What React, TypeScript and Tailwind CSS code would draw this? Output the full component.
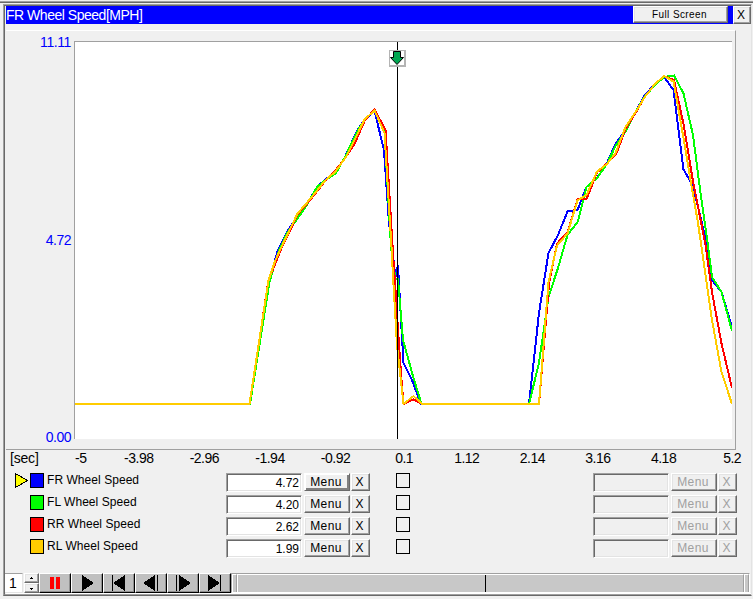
import type { ReactNode } from 'react';
import clsx from 'clsx';

type Channel = {
  name: string;
  value: string;
  swatch: string;
  stroke: string;
  points: string;
};

const channels: Channel[] = [
  {
    name: 'FR Wheel Speed',
    value: '4.72',
    swatch: 'bg-[#0000ff]',
    stroke: '#0000ff',
    points:
      '75,404 250,404 269,283 277.5,251 287,232 299,214 308,202 317,187 327,178 336,173 345,157 357,131 365,119 374.5,111 384,150 389,223 395.5,277 396,272 398,265 401,320 403.5,363 412,380 421,404 529,404 539,313 548.5,253 558,235 567.5,211.5 577.5,210 586.5,187 597,178 606.5,164 615.5,144 625.5,130 635,113 644.5,95.5 654,85 664,77 673.5,90 683.5,169.5 692,184 698,207 706,240 712,280 721.5,292 732,327',
  },
  {
    name: 'FL Wheel Speed',
    value: '4.20',
    swatch: 'bg-[#00ff00]',
    stroke: '#00ff00',
    points:
      '75,404 250,404 269.5,282 278,253 287,233 300,215 308,203 317,187 327,179 336,173 345,157 358,130 365,119 374.5,110.5 384.5,132 391,247 395.5,279 398,279 403,340 413.5,378 421.5,404 529,404 539,363 548.5,297 558,268 567.5,235 578,221.5 586.5,187 597,178 607,164 615.5,146 625.5,131.5 635,113 644.5,97 654,86 664,77 674,75.5 683.5,93.5 693,135 700.5,193 707,238 712,277 721.5,292 732,331',
  },
  {
    name: 'RR Wheel Speed',
    value: '2.62',
    swatch: 'bg-[#ff0000]',
    stroke: '#ff0000',
    points:
      '75,404 249.5,404 268.5,280 276,262 282,247 298,214 311,199 326,180 335,171 346,157 355,143 365,120 374.5,109.5 385.5,130 393,253 395.5,290 398,330 401,373 403.5,404 413.5,399.5 422,404 539,404 549,284 557,243.5 567.5,232.5 577.5,199.5 586.5,199 597,172.5 607,163.5 616,154.5 625.5,129 635.5,113 644.5,97.5 654,85 664,76 674,80 683.5,124 693,181.5 702,227 705.5,245 712,292 721.5,343.5 732,388',
  },
  {
    name: 'RL Wheel Speed',
    value: '1.99',
    swatch: 'bg-[#ffcc00]',
    stroke: '#ffcc00',
    points:
      '75,404 249.5,404 268.5,280.5 275,261 281,248 297.5,213.5 311,198 326,179.5 335,172 346,157 355,139 364.5,119.5 374.5,110.5 384.5,133 391.5,247 392.5,267 397,345 403.5,404 413.5,396 422,404 539,404 548.5,282 557,245.5 567.5,233.5 577.5,200.5 586.5,195 597,171.5 607,164 615.5,153 625.5,127 635,113 644.5,97.5 654,85 664,76 673.5,81.5 683.5,138 690.5,180 698,223 712,320 721.5,372 732,404',
  },
];

const ticks = ['-3.98', '-2.96', '-1.94', '-0.92', '0.1', '1.12', '2.14', '3.16', '4.18', '5.2'];

function Raised({ children, className }: { children?: ReactNode; className?: string }) {
  return (
    <button
      className={clsx(
        'flex shrink-0 items-center justify-center border border-t-white border-l-white border-r-[#696969] border-b-[#696969] bg-[#f0f0f0] shadow-[inset_-1px_-1px_0_#a0a0a0,inset_1px_1px_0_#e3e3e3] leading-none',
        className
      )}
    >
      {children}
    </button>
  );
}

function ValueGroup({ value, disabled, focused }: { value?: string; disabled?: boolean; focused?: boolean }) {
  const label = disabled ? 'text-[#a0a0a0] [text-shadow:1px_1px_0_#fff]' : 'text-black';
  return (
    <div className={clsx('flex h-[19px] text-[12px]', label)}>
      <div
        className={clsx(
          'h-[19px] w-[76px] border border-t-[#a0a0a0] border-l-[#a0a0a0] border-r-white border-b-white pr-[2px] text-right leading-[19px] shadow-[inset_1px_1px_0_#696969,inset_-1px_-1px_0_#e3e3e3]',
          disabled ? 'bg-[#f0f0f0]' : 'bg-white'
        )}
      >
        {value}
      </div>
      <Raised
        className={clsx(
          'ml-[2px] h-[18px] w-[46px] pr-[2px] tracking-[0.4px]',
          focused && 'border-t-[#696969] border-l-[#696969] shadow-[inset_1px_1px_0_#fff,inset_-2px_-2px_0_#808080]'
        )}
      >
        Menu
      </Raised>
      <Raised className="ml-px h-[18px] w-[19px] pr-[2px]">X</Raised>
    </div>
  );
}

function Plot() {
  return (
    <svg width="657" height="397" viewBox="75 42 657 397" className="block bg-white" shapeRendering="crispEdges">
      {channels.map((c) => (
        <polyline key={c.name} points={c.points} fill="none" stroke={c.stroke} strokeWidth="2" />
      ))}
      <rect x="397" y="42" width="1" height="397" fill="#000" />
      {/* cursor handle */}
      <rect x="389" y="50" width="17" height="17" fill="#b4b4b4" />
      <rect x="390" y="51" width="14" height="14" fill="#fff" />
      <path
        d="M393.5 51.5h7v6h3L397 64.5 390.5 57.5h3z"
        fill="#00a651"
        stroke="#000"
        shapeRendering="geometricPrecision"
      />
    </svg>
  );
}

function TransportButton({ children }: { children: ReactNode }) {
  return (
    <button className="h-[20px] w-[32px] shrink-0 border border-r-black border-b-black border-t-white border-l-white bg-[#c0c0c0] shadow-[inset_-1px_-1px_0_#909090]">
      <svg width="30" height="18" viewBox="0 0 30 18" shapeRendering="crispEdges" fill="#000">
        {children}
      </svg>
    </button>
  );
}

export default function App() {
  return (
    <div className="flex h-[599px] w-[753px] flex-col overflow-hidden bg-[#f0f0f0] pt-px font-['Liberation_Sans',Arial,sans-serif] text-black">
      <div className="h-[2px] shrink-0 border-b border-b-[#696969] bg-[#a0a0a0]" />
      <div className="ml-[3px] mt-px h-[592px] w-[749px] shrink-0 border border-t-[#a0a0a0] border-l-[#a0a0a0] border-r-[#e3e3e3] border-b-[#696969]">
        <div className="flex h-[590px] flex-col border-t border-l border-b border-t-[#696969] border-l-[#696969] border-b-[#a0a0a0] pl-px">
          {/* Title bar */}
          <div className="flex h-[18px] shrink-0 bg-[#0000ff] text-white">
            <div className="flex-1 whitespace-nowrap text-[14px] leading-[19px] tracking-[-0.48px]">FR Wheel Speed[MPH]</div>
            <Raised className="h-[17px] w-[95px] pr-[2px] text-[10px] tracking-[0.4px] text-black">Full Screen</Raised>
            <Raised className="ml-[5px] h-[18px] w-[18px] pr-[2px] text-[12px] text-black">X</Raised>
          </div>

          {/* Chart */}
          <div className="mt-[6px] flex h-[420px] w-[730px] shrink-0 border-t border-r border-b border-t-white border-r-[#a0a0a0] border-b-[#a0a0a0] pt-[10px]">
            <div className="-mt-[7px] flex h-[411px] w-[65px] flex-col justify-between text-right text-[14px] leading-[16px] tracking-[-0.5px] text-[#0000ff]">
              <div className="tracking-[-0.4px]">11.11</div>
              <div>4.72</div>
              <div>0.00</div>
            </div>
            <div className="ml-[3px] h-[398px] border-t border-l border-[#a0a0a0]">
              <Plot />
            </div>
          </div>

          {/* Time axis */}
          <div className="flex h-[23px] shrink-0 text-[14px] leading-[17px] tracking-[-0.5px]">
            <div className="w-[69px] shrink-0 pl-[4px] tracking-[-0.2px]">[sec]</div>
            <div className="w-[31px] shrink-0">-5</div>
            {ticks.map((t) => (
              <div key={t} className={clsx('w-[65.6px] shrink-0 text-center', t.length === 3 && 'pl-[6px]')}>
                {t}
              </div>
            ))}
          </div>

          {/* Channels */}
          <div className="flex h-[100px] shrink-0 flex-col gap-[3px]">
            {channels.map((c, i) => (
              <div key={c.name} className="flex h-[19px] shrink-0">
                <div className="w-[24px] pl-[9px]">
                  {i === 0 && (
                    <svg width="14" height="15" viewBox="0 0 14 15" shapeRendering="crispEdges">
                      <path d="M.5.5v14l12-7z" fill="#ff0" stroke="#000" />
                    </svg>
                  )}
                </div>
                <div className={clsx('h-[15px] w-[14px] border border-black', c.swatch)} />
                <div className="w-[182px] pl-[3px] text-[12px] leading-[14px] tracking-[0.05px]">{c.name}</div>
                <ValueGroup value={c.value} focused={i === 0} />
                <div className="ml-[26px] h-[15px] w-[14px] border border-black" />
                <div className="ml-[183px]">
                  <ValueGroup disabled />
                </div>
              </div>
            ))}
          </div>

          {/* Playback */}
          <div className="-ml-px flex h-[20px] w-[745px] shrink-0">
            <div className="h-[20px] w-[18px] shrink-0 border-t border-r border-b border-t-[#a0a0a0] border-r-[#e3e3e3] border-b-[#e3e3e3] bg-white pr-px text-center text-[14px] leading-[19px]">
              1
            </div>
            <div className="ml-px flex w-[15px] shrink-0 flex-col">
              <Raised className="h-[10px] w-[15px]">
                <svg width="5" height="3" viewBox="0 0 5 3" shapeRendering="crispEdges">
                  <path d="M2 0h1v1h1v1H1V1h1z" />
                </svg>
              </Raised>
              <Raised className="h-[10px] w-[15px]">
                <svg width="5" height="3" viewBox="0 0 5 3" shapeRendering="crispEdges">
                  <path d="M1 1h3v1H3v1H2V2H1z" />
                </svg>
              </Raised>
            </div>
            <TransportButton>
              <path d="M10 3h4v12h-4zM16 3h4v12h-4z" fill="#f00" />
            </TransportButton>
            <TransportButton>
              <path d="M10 1v16l12-8z" />
            </TransportButton>
            <TransportButton>
              <path d="M8 1h1v16H8zM21 1v16L9 9z" />
            </TransportButton>
            <TransportButton>
              <path d="M19 1v16L7 9zM21 1h1v16h-1z" />
            </TransportButton>
            <TransportButton>
              <path d="M8 1h1v16H8zM11 1v16l12-8z" />
            </TransportButton>
            <TransportButton>
              <path d="M8 1v16l12-8zM20 1h1v16h-1z" />
            </TransportButton>
            <div className="flex h-[20px] flex-1 border border-t-[#a0a0a0] border-l-[#a0a0a0] border-r-white border-b-white bg-[#c8c8c8]">
              <div className="w-[4px] border-t border-l border-white" />
              <div className="flex flex-1 justify-center border-t border-r border-l border-t-white border-r-[#a0a0a0] border-l-[#a0a0a0] shadow-[inset_1px_0_0_#fff]">
                <div className="mr-[9px] w-px bg-black" />
              </div>
              <div className="w-[5px] border-t border-l border-white border-r border-r-[#a0a0a0]" />
            </div>
          </div>
          <div className="h-px shrink-0 bg-white" />
        </div>
      </div>
    </div>
  );
}
